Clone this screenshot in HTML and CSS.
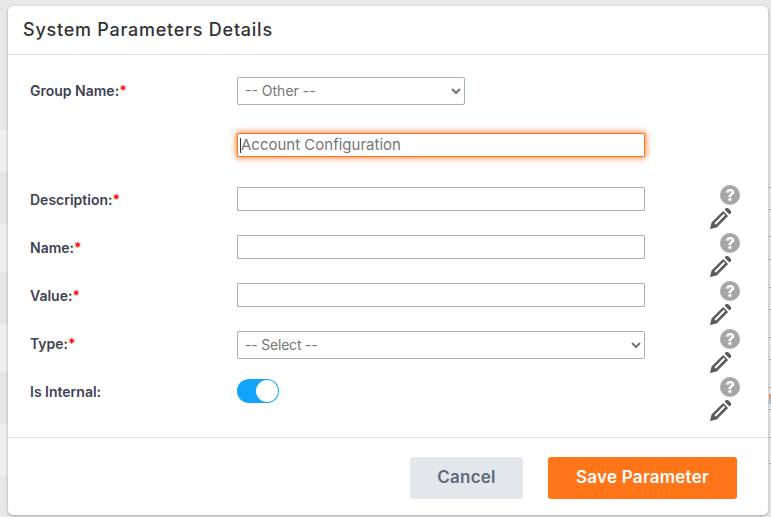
FILE: index.html
```html
<!DOCTYPE html>
<html lang="en">
<head>
    <meta charset="UTF-8">
    <title>System Parameters Details</title>
    <link rel="stylesheet" href="styles.css">
</head>
<body>
    <div class="backdrop">
        <div class="strip-left"></div>
        <div class="strip-right"><span class="strip-glyph"></span></div>
    </div>

    <div class="modal">
        <div class="modal-header">System Parameters Details</div>

        <form class="modal-body">
            <div class="row row-group">
                <label class="label">Group Name:<span class="req">*</span></label>
                <select class="control select-short"><option>-- Other --</option></select>
            </div>
            <div class="row row-other">
                <span class="label"></span>
                <div class="control text-box focused"><span class="caret"></span>Account Configuration</div>
            </div>

            <div class="row row-field">
                <label class="label">Description:<span class="req">*</span></label>
                <input class="control text-box" type="text">
                <div class="icons">
                    <svg class="help" viewBox="0 0 20 20"><use href="#help"/></svg>
                    <svg class="pencil" viewBox="0 0 24 24"><use href="#pencil"/></svg>
                </div>
            </div>
            <div class="row row-field">
                <label class="label">Name:<span class="req">*</span></label>
                <input class="control text-box" type="text">
                <div class="icons">
                    <svg class="help" viewBox="0 0 20 20"><use href="#help"/></svg>
                    <svg class="pencil" viewBox="0 0 24 24"><use href="#pencil"/></svg>
                </div>
            </div>
            <div class="row row-field">
                <label class="label">Value:<span class="req">*</span></label>
                <input class="control text-box" type="text">
                <div class="icons">
                    <svg class="help" viewBox="0 0 20 20"><use href="#help"/></svg>
                    <svg class="pencil" viewBox="0 0 24 24"><use href="#pencil"/></svg>
                </div>
            </div>
            <div class="row row-field">
                <label class="label">Type:<span class="req">*</span></label>
                <select class="control select-long"><option>-- Select --</option></select>
                <div class="icons">
                    <svg class="help" viewBox="0 0 20 20"><use href="#help"/></svg>
                    <svg class="pencil" viewBox="0 0 24 24"><use href="#pencil"/></svg>
                </div>
            </div>
            <div class="row row-field">
                <label class="label">Is Internal:</label>
                <div class="control toggle-cell"><span class="toggle"><span class="knob"></span></span></div>
                <div class="icons">
                    <svg class="help" viewBox="0 0 20 20"><use href="#help"/></svg>
                    <svg class="pencil" viewBox="0 0 24 24"><use href="#pencil"/></svg>
                </div>
            </div>
        </form>

        <div class="modal-footer">
            <button class="btn btn-cancel" type="button">Cancel</button>
            <button class="btn btn-save" type="button">Save Parameter</button>
        </div>
    </div>

    <svg class="defs" width="0" height="0">
        <symbol id="help" viewBox="0 0 20 20">
            <circle cx="10" cy="10" r="10" fill="#a6a6a6"/>
            <path d="M6 7.6C6.2 5.2 7.9 3.9 10.2 3.9c2.4 0 4 1.4 4 3.4 0 1.5-.8 2.3-1.9 3-.9.6-1.1.9-1.1 1.8H8.5c0-1.7.4-2.5 1.5-3.2.9-.6 1.3-1 1.3-1.5 0-.7-.5-1.1-1.2-1.1-.8 0-1.3.5-1.4 1.4z" fill="#fff"/>
            <rect x="8.5" y="13" width="2.8" height="2.8" rx=".6" fill="#fff"/>
        </symbol>
        <symbol id="pencil" viewBox="0 0 24 24">
            <path fill="#595959" fill-rule="evenodd" d="M0 24l1.8-7.5L15 3.3l5.7 5.7L7.5 22.2zM5 17.4l1.6 1.6L17.3 8.4l-1.7-1.7z"/>
            <path fill="#595959" d="M16.6 1.7l.9-.9a2.8 2.8 0 0 1 3.9 0l1.8 1.8a2.8 2.8 0 0 1 0 3.9l-.9.9z"/>
        </symbol>
    </svg>
</body>
</html>
```

FILE: styles.css
```css
* {
    box-sizing: border-box;
}

body {
    margin: 0;
    height: 517px;
    overflow: hidden;
    background: #e8e8e8;
    font-family: Inter, 'Open Sans', sans-serif;
    color: #3f4254;
}

.backdrop {
    position: absolute;
    inset: 0;
}

/* rows of the page behind the dialog */
.strip-left {
    position: absolute;
    left: 0;
    top: 0;
    bottom: 0;
    width: 8px;
    background: linear-gradient(to bottom,
        #e8e8e8 0 130px,
        #efefef 130px 172px,
        #e5e6e8 172px 224px,
        #efefef 224px 272px,
        #e5e6e8 272px 324px,
        #efefef 324px 372px,
        #e5e6e8 372px 424px,
        #efefef 424px 476px,
        #e8e8e8 476px);
}

.strip-right {
    position: absolute;
    right: 0;
    top: 0;
    bottom: 0;
    width: 2px;
    background:
        linear-gradient(#a9adb3, #a9adb3) 0 187px / 2px 1px no-repeat,
        linear-gradient(#a9adb3, #a9adb3) 0 209px / 2px 1px no-repeat,
        linear-gradient(#a9adb3, #a9adb3) 0 236px / 2px 1px no-repeat,
        linear-gradient(#a9adb3, #a9adb3) 0 259px / 2px 1px no-repeat,
        linear-gradient(#a9adb3, #a9adb3) 0 287px / 2px 1px no-repeat,
        linear-gradient(#a9adb3, #a9adb3) 0 309px / 2px 1px no-repeat,
        linear-gradient(#a9adb3, #a9adb3) 0 337px / 2px 1px no-repeat,
        linear-gradient(#a9adb3, #a9adb3) 0 359px / 2px 1px no-repeat,
        linear-gradient(#a9adb3, #a9adb3) 0 387px / 2px 1px no-repeat,
        linear-gradient(#a9adb3, #a9adb3) 0 409px / 2px 1px no-repeat,
        linear-gradient(#a9adb3, #a9adb3) 0 437px / 2px 1px no-repeat,
        linear-gradient(#a9adb3, #a9adb3) 0 463px / 2px 1px no-repeat;
}

.strip-glyph {
    position: absolute;
    left: 0;
    top: 394px;
    width: 2px;
    height: 10px;
    background: linear-gradient(to bottom, #d9a066, #a9c8ea);
}

.modal {
    position: absolute;
    left: 8px;
    top: 6px;
    width: 760px;
    height: 509px;
    background: #fff;
    border-radius: 5px;
    box-shadow: 0 1px 3px rgba(0,0,0,0.3);
}

.modal-header {
    height: 49px;
    padding: 12px 15px 0;
    border-bottom: 1px solid #e3e3e3;
    font-size: 18px;
    font-weight: 500;
    letter-spacing: 0.75px;
    line-height: 24px;
    color: #333;
}

.modal-body {
    padding: 22px 0 0 22px;
}

.row {
    display: flex;
}

.row-group {
    height: 28px;
    align-items: center;
}

.row-other {
    height: 24px;
    margin-top: 28px;
    align-items: center;
}

.row-field {
    height: 48px;
}

.row-other + .row-field {
    margin-top: 30px;
}

.label {
    width: 207px;
    flex: none;
    padding-top: 1px;
    font-size: 14px;
    font-weight: 600;
    line-height: 24px;
}

.row-group .label {
    padding-top: 0;
}

.req {
    color: #f00;
}

.control {
    flex: none;
    font-family: inherit;
    font-size: 14px;
    color: #757575;
}

.text-box {
    width: 408px;
    height: 24px;
    padding: 0 3px;
    border: 1px solid #a5b0c0;
    border-radius: 1px;
    background: #fff;
    line-height: 22px;
    outline: none;
}

.focused {
    padding-left: 2px;
    border-color: #ff7518;
    box-shadow: 0 0 6px 1px rgba(255,100,20,0.8);
    font-size: 15px;
}

.caret {
    display: inline-block;
    width: 1px;
    height: 15px;
    margin-bottom: -3px;
    background: #333;
}

select.control {
    height: 28px;
    padding: 0 3px 2px;
    border: 1px solid #a5b0c0;
    border-radius: 2px;
    background: #fff;
}

.select-short {
    width: 228px;
}

.select-long {
    width: 408px;
    letter-spacing: -0.2px;
}

.toggle-cell {
    width: 408px;
}

.toggle {
    display: block;
    width: 42px;
    height: 24px;
    padding: 1px;
    border-radius: 12px;
    background: #12a3fb;
}

.knob {
    display: block;
    width: 22px;
    height: 22px;
    margin-left: 18px;
    border-radius: 50%;
    background: #fff;
}

.icons {
    position: relative;
    width: 40px;
    margin-left: 65px;
    height: 48px;
}

.help {
    position: absolute;
    left: 10px;
    top: -2px;
    width: 20px;
    height: 20px;
}

.pencil {
    position: absolute;
    left: 0;
    top: 21px;
    width: 21px;
    height: 21px;
}

.modal-footer {
    position: absolute;
    left: 0;
    right: 0;
    bottom: 0;
    height: 78px;
    padding-top: 19px;
    padding-right: 31px;
    border-top: 1px solid #e3e3e3;
    display: flex;
    justify-content: flex-end;
    gap: 25px;
}

.btn {
    height: 42px;
    padding: 0 0 2px;
    border: none;
    border-radius: 3px;
    font-family: inherit;
    font-size: 17px;
    font-weight: 600;
    letter-spacing: 0.25px;
}

.btn-cancel {
    width: 113px;
    background: #e4e7ec;
    color: #5f6b7a;
}

.btn-save {
    width: 189px;
    background: #ff7518;
    color: #fff;
}

.defs {
    position: absolute;
}
```
